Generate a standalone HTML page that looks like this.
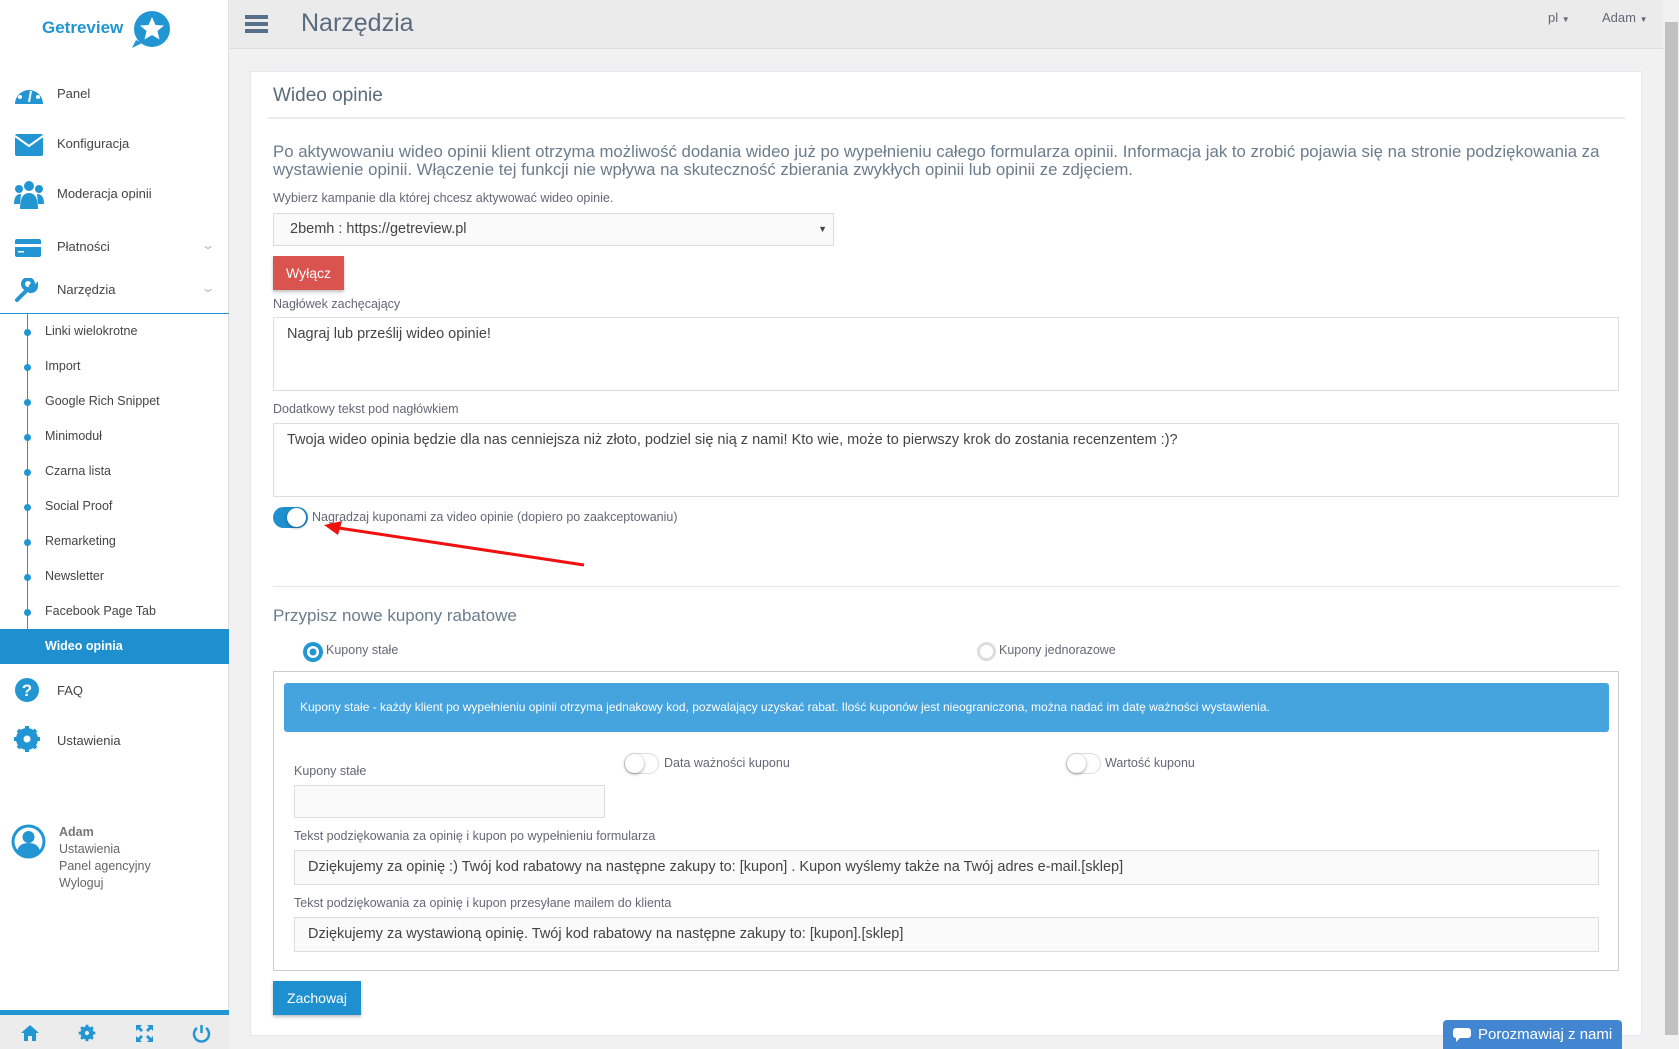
<!DOCTYPE html>
<html><head><meta charset="utf-8"><style>
*{box-sizing:border-box;margin:0;padding:0}
body{width:1679px;height:1049px;overflow:hidden;background:#f1f1f1;font-family:"Liberation Sans",sans-serif;color:#555;position:relative}
.a{position:absolute;white-space:nowrap}
#side{position:absolute;left:0;top:0;width:229px;height:1049px;background:#fff;border-right:1px solid #ddd}
.mi{position:absolute;left:57px;font-size:13px;color:#444}
.ic{position:absolute;left:14px;width:30px;height:26px}
.sub{position:absolute;left:45px;font-size:12.5px;color:#444}
.dot{position:absolute;left:24px;width:7px;height:7px;border-radius:50%;background:#2196d3}
.lbl{position:absolute;font-size:12.5px;color:#667;white-space:nowrap}
.inp{position:absolute;background:#fafafa;border:1px solid #ddd;font-size:14.5px;color:#444;padding-left:13px}
.tog{position:absolute;width:35px;height:21px;border-radius:11px}
.tog i{position:absolute;top:1px;width:19px;height:19px;border-radius:50%;background:#fff;box-shadow:0 1px 3px rgba(0,0,0,.4)}
</style></head><body>
<div id="side">
 <div class="a" style="left:42px;top:18px;font-size:17px;font-weight:bold;color:#2196d3">Getreview</div>
 <svg class="a" style="left:130px;top:10px" width="40" height="40" viewBox="0 0 40 40"><circle cx="22" cy="19" r="18" fill="#2196d3"/><path d="M6 30 L2 38 L12 33Z" fill="#2196d3"/><path d="M22 7 L25.5 15 L34 15.5 L27.5 21 L29.5 29.5 L22 25 L14.5 29.5 L16.5 21 L10 15.5 L18.5 15Z" fill="#fff"/></svg>
 <svg class="ic" style="top:80px" viewBox="0 0 30 26"><path d="M1 24 A14 14 0 1 1 29 24Z" fill="#2196d3"/><circle cx="6" cy="17" r="2" fill="#fff"/><circle cx="9" cy="9" r="2" fill="#fff"/><circle cx="15" cy="6" r="2" fill="#fff"/><circle cx="21" cy="9" r="2" fill="#fff"/><circle cx="24" cy="17" r="2" fill="#fff"/><path d="M15 22 L17 11" stroke="#fff" stroke-width="2"/></svg>
 <div class="mi" style="top:86px">Panel</div>
 <svg class="ic" style="top:132px" viewBox="0 0 30 26"><rect x="1" y="2" width="28" height="22" rx="2" fill="#2196d3"/><path d="M1 4 L15 14 L29 4" stroke="#fff" stroke-width="2" fill="none"/></svg>
 <div class="mi" style="top:136px">Konfiguracja</div>
 <svg class="ic" style="top:180px;height:30px" viewBox="0 0 30 30"><circle cx="15" cy="6" r="5" fill="#2196d3"/><circle cx="5" cy="9" r="4" fill="#2196d3"/><circle cx="25" cy="9" r="4" fill="#2196d3"/><path d="M6 29 Q6 13 15 13 Q24 13 24 29Z" fill="#2196d3"/><path d="M0 24 Q0 14 7 14 L6 24Z M30 24 Q30 14 23 14 L24 24Z" fill="#2196d3"/></svg>
 <div class="mi" style="top:186px">Moderacja opinii</div>
 <svg class="ic" style="top:238px" viewBox="0 0 30 26"><rect x="1" y="1" width="26" height="18" rx="2" fill="#2196d3"/><rect x="1" y="6" width="26" height="3" fill="#fff"/><rect x="4" y="13" width="6" height="1.5" fill="#fff"/></svg>
 <div class="mi" style="top:239px">Płatności</div>
 <div class="a" style="left:203px;top:238px;color:#bbb;font-size:12px;transform:scaleX(1.5)">⌄</div>
 <svg class="ic" style="top:278px" viewBox="0 0 30 26"><path d="M3 22 L14 11 M14 11 A5 5 0 1 1 19 6 L17 8 L18 10 L20 10 L22 8 A5 5 0 0 1 16 13" stroke="#2196d3" stroke-width="4" fill="none" stroke-linecap="round"/></svg>
 <div class="mi" style="top:282px">Narzędzia</div>
 <div class="a" style="left:203px;top:281px;color:#bbb;font-size:12px;transform:scaleX(1.5)">⌄</div>
 <div class="a" style="left:0;top:313px;width:229px;height:1px;background:#2196d3"></div>
 <div class="a" style="left:27px;top:313px;width:1px;height:317px;background:#2196d3"></div>
 <div class="dot" style="top:329px"></div><div class="sub" style="top:324px">Linki wielokrotne</div>
 <div class="dot" style="top:364px"></div><div class="sub" style="top:359px">Import</div>
 <div class="dot" style="top:399px"></div><div class="sub" style="top:394px">Google Rich Snippet</div>
 <div class="dot" style="top:434px"></div><div class="sub" style="top:429px">Minimoduł</div>
 <div class="dot" style="top:469px"></div><div class="sub" style="top:464px">Czarna lista</div>
 <div class="dot" style="top:504px"></div><div class="sub" style="top:499px">Social Proof</div>
 <div class="dot" style="top:539px"></div><div class="sub" style="top:534px">Remarketing</div>
 <div class="dot" style="top:574px"></div><div class="sub" style="top:569px">Newsletter</div>
 <div class="dot" style="top:609px"></div><div class="sub" style="top:604px">Facebook Page Tab</div>
 <div class="a" style="left:0;top:629px;width:229px;height:35px;background:#1e90d0"></div>
 <div class="sub" style="top:639px;color:#fff;font-weight:bold">Wideo opinia</div>
 <svg class="ic" style="top:677px" viewBox="0 0 30 26"><circle cx="13" cy="13" r="12" fill="#2196d3"/><text x="13" y="19" font-size="17" font-weight="bold" fill="#fff" text-anchor="middle" font-family="Liberation Sans">?</text></svg>
 <div class="mi" style="top:683px">FAQ</div>
 <svg class="ic" style="top:726px" viewBox="0 0 30 26"><circle cx="13" cy="13" r="8" fill="none" stroke="#2196d3" stroke-width="6"/><path d="M13 0V26M0 13H26M4 4L22 22M22 4L4 22" stroke="#2196d3" stroke-width="4"/><circle cx="13" cy="13" r="3.5" fill="#fff"/></svg>
 <div class="mi" style="top:733px">Ustawienia</div>
 <svg class="a" style="left:10px;top:823px" width="37" height="37" viewBox="0 0 37 37"><circle cx="18.5" cy="18.5" r="17" fill="#2196d3"/><circle cx="18.5" cy="18.5" r="14" fill="#fff"/><circle cx="18.5" cy="14" r="6" fill="#2196d3"/><path d="M7 28 Q9 20 18.5 20 Q28 20 30 28 A14 14 0 0 1 7 28Z" fill="#2196d3"/></svg>
 <div class="a" style="left:59px;top:825px;font-size:12.5px;font-weight:bold;color:#777">Adam</div>
 <div class="a" style="left:59px;top:842px;font-size:12.5px;color:#666">Ustawienia</div>
 <div class="a" style="left:59px;top:859px;font-size:12.5px;color:#666">Panel agencyjny</div>
 <div class="a" style="left:59px;top:876px;font-size:12.5px;color:#666">Wyloguj</div>
 <div class="a" style="left:0;top:1010px;width:229px;height:5px;background:#2196d3"></div>
 <div class="a" style="left:0;top:1015px;width:229px;height:34px;background:#ececec"></div>
 <svg class="a" style="left:20px;top:1024px" width="20" height="18" viewBox="0 0 20 18"><path d="M10 1 L19 9 L16 9 L16 17 L12 17 L12 12 L8 12 L8 17 L4 17 L4 9 L1 9Z" fill="#2196d3"/></svg>
 <svg class="a" style="left:78px;top:1024px" width="18" height="18" viewBox="0 0 26 26"><circle cx="13" cy="13" r="7" fill="none" stroke="#2196d3" stroke-width="5"/><path d="M13 1V25M1 13H25M4.5 4.5L21.5 21.5M21.5 4.5L4.5 21.5" stroke="#2196d3" stroke-width="4"/><circle cx="13" cy="13" r="3" fill="#ececec"/></svg>
 <svg class="a" style="left:135px;top:1024px" width="19" height="19" viewBox="0 0 19 19"><path d="M1 1h6l-2 2 3 3-2 2-3-3-2 2zM18 1v6l-2-2-3 3-2-2 3-3-2-2zM1 18v-6l2 2 3-3 2 2-3 3 2 2zM18 18h-6l2-2-3-3 2-2 3 3 2-2z" fill="#2196d3"/></svg>
 <svg class="a" style="left:192px;top:1024px" width="19" height="19" viewBox="0 0 19 19"><path d="M5 4 A7.5 7.5 0 1 0 14 4" fill="none" stroke="#2196d3" stroke-width="2.5"/><path d="M9.5 1V9" stroke="#2196d3" stroke-width="2.5"/></svg>
</div>
<!-- header -->
<div class="a" style="left:230px;top:0;width:1433px;height:49px;background:#ebebeb;border-bottom:1px solid #ddd"></div>
<div class="a" style="left:245px;top:15px;width:23px;height:4px;background:#56708a;box-shadow:0 7px 0 #56708a,0 14px 0 #56708a"></div>
<div class="a" style="left:301px;top:9px;font-size:25px;color:#5a6b7d">Narzędzia</div>
<div class="a" style="left:1548px;top:10px;font-size:13px;color:#667">pl <span style="font-size:8px">▼</span></div>
<div class="a" style="left:1602px;top:10px;font-size:13px;color:#667">Adam <span style="font-size:8px">▼</span></div>
<!-- scrollbar -->
<div class="a" style="left:1663px;top:0;width:16px;height:1049px;background:#f1f1f1"></div>
<div class="a" style="left:1665px;top:22px;width:13px;height:1013px;background:#c1c1c1"></div>
<!-- card -->
<div class="a" style="left:250px;top:71px;width:1392px;height:965px;background:#fff;border:1px solid #e6e6ee"></div>
<div class="a" style="left:273px;top:85px;font-size:19px;color:#5a6b7d">Wideo opinie</div>
<div class="a" style="left:268px;top:117px;width:1357px;height:2px;background:#e8eaee"></div>
<div class="a" style="left:273px;top:143px;font-size:16.8px;color:#6b7c8d;line-height:18px">Po aktywowaniu wideo opinii klient otrzyma możliwość dodania wideo już po wypełnieniu całego formularza opinii. Informacja jak to zrobić pojawia się na stronie podziękowania za<br>wystawienie opinii. Włączenie tej funkcji nie wpływa na skuteczność zbierania zwykłych opinii lub opinii ze zdjęciem.</div>
<div class="lbl" style="left:273px;top:191px">Wybierz kampanie dla której chcesz aktywować wideo opinie.</div>
<div class="inp" style="left:273px;top:213px;width:561px;height:33px;line-height:31px;padding-left:16px">2bemh : https://getreview.pl<span style="position:absolute;right:6px;font-size:9px">▼</span></div>
<div class="a" style="left:273px;top:256px;width:71px;height:34px;background:#d9534f;color:#fff;font-size:14px;text-align:center;line-height:34px;box-shadow:0 2px 3px rgba(0,0,0,.25)">Wyłącz</div>
<div class="lbl" style="left:273px;top:297px">Nagłówek zachęcający</div>
<div class="inp" style="left:273px;top:317px;width:1346px;height:74px;padding-top:8px;background:#fff">Nagraj lub prześlij wideo opinie!</div>
<div class="lbl" style="left:273px;top:402px">Dodatkowy tekst pod nagłówkiem</div>
<div class="inp" style="left:273px;top:423px;width:1346px;height:74px;padding-top:8px;background:#fff">Twoja wideo opinia będzie dla nas cenniejsza niż złoto, podziel się nią z nami! Kto wie, może to pierwszy krok do zostania recenzentem :)?</div>
<div class="tog" style="left:273px;top:507px;background:#1e90d0"><i style="left:14px"></i></div>
<div class="lbl" style="left:312px;top:510px">Nagradzaj kuponami za video opinie (dopiero po zaakceptowaniu)</div>
<svg class="a" style="left:320px;top:515px" width="270" height="55"><path d="M264 50 L12 12" stroke="#f01010" stroke-width="3"/><path d="M4 10 L22 6 L18 20Z" fill="#f01010"/></svg>
<div class="a" style="left:273px;top:586px;width:1346px;height:1px;background:#e5e5e5"></div>
<div class="a" style="left:273px;top:606px;font-size:17px;color:#6b7c8d">Przypisz nowe kupony rabatowe</div>
<svg class="a" style="left:303px;top:642px" width="20" height="20"><circle cx="10" cy="10" r="10" fill="#2196d3"/><circle cx="10" cy="10" r="6" fill="#fff"/><circle cx="10" cy="10" r="3.5" fill="#2196d3"/></svg>
<div class="lbl" style="left:326px;top:643px">Kupony stałe</div>
<div class="a" style="left:977px;top:642px;width:19px;height:19px;border-radius:50%;border:3px solid #ddd;background:#fff"></div>
<div class="lbl" style="left:999px;top:643px">Kupony jednorazowe</div>
<div class="a" style="left:273px;top:671px;width:1346px;height:300px;border:1px solid #ccc"></div>
<div class="a" style="left:284px;top:683px;width:1325px;height:49px;background:#45a3dd;border-radius:3px;color:#fff;font-size:12px;line-height:49px;padding-left:16px">Kupony stałe - każdy klient po wypełnieniu opinii otrzyma jednakowy kod, pozwalający uzyskać rabat. Ilość kuponów jest nieograniczona, można nadać im datę ważności wystawienia.</div>
<div class="lbl" style="left:294px;top:764px">Kupony stałe</div>
<div class="inp" style="left:294px;top:785px;width:311px;height:33px"></div>
<div class="tog" style="left:624px;top:753px;border:1px solid #ddd;background:#fff"><i style="left:0;top:0"></i></div>
<div class="lbl" style="left:664px;top:756px">Data ważności kuponu</div>
<div class="tog" style="left:1066px;top:753px;border:1px solid #ddd;background:#fff"><i style="left:0;top:0"></i></div>
<div class="lbl" style="left:1105px;top:756px">Wartość kuponu</div>
<div class="lbl" style="left:294px;top:829px">Tekst podziękowania za opinię i kupon po wypełnieniu formularza</div>
<div class="inp" style="left:294px;top:850px;width:1305px;height:35px;line-height:33px">Dziękujemy za opinię :) Twój kod rabatowy na następne zakupy to: [kupon] . Kupon wyślemy także na Twój adres e-mail.[sklep]</div>
<div class="lbl" style="left:294px;top:896px">Tekst podziękowania za opinię i kupon przesyłane mailem do klienta</div>
<div class="inp" style="left:294px;top:917px;width:1305px;height:35px;line-height:33px">Dziękujemy za wystawioną opinię. Twój kod rabatowy na następne zakupy to: [kupon].[sklep]</div>
<div class="a" style="left:273px;top:981px;width:88px;height:34px;background:#1e90d0;color:#fff;font-size:14px;text-align:center;line-height:34px;box-shadow:0 2px 3px rgba(0,0,0,.25)">Zachowaj</div>
<div class="a" style="left:1443px;top:1020px;width:179px;height:29px;background:#4286d2;border-radius:4px 4px 0 0;color:#fff;font-size:15px;line-height:29px;padding-left:35px">Porozmawiaj z nami</div>
<svg class="a" style="left:1452px;top:1027px" width="20" height="17"><path d="M4 1h12a3 3 0 0 1 3 3v4a3 3 0 0 1-3 3H8l-4 4v-4a3 3 0 0 1-3-3V4a3 3 0 0 1 3-3z" fill="#fff"/></svg>
</body></html>
